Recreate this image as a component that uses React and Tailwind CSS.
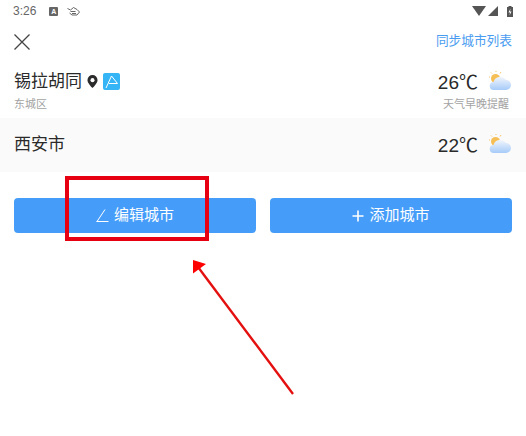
import React from 'react'

const cjk = "font-['Liberation_Sans','Noto_Sans_CJK_SC',sans-serif]"

function WeatherIcon({ id }) {
  return (
    <svg width="24" height="22" viewBox="0 0 24 22" className="shrink-0">
      <defs>
        <linearGradient id={id} x1="0" y1="0" x2="0" y2="1">
          <stop offset="0" stopColor="#f1f5fc" />
          <stop offset="1" stopColor="#a6cbf9" />
        </linearGradient>
      </defs>
      <circle cx="7.500" cy="7.500" r="4.500" fill="#f5bf55" />
      <path d="M8 1V0M4 2.500L3 1.500M2 6H1M12 2.500l1-1.500" stroke="#f5c566" strokeWidth="1" />
      <path d="M6 19a4 4 0 0 1-.5-8A7 7 0 0 1 18 9a5 5 0 0 1 0 10z" fill={`url(#${id})`} />
    </svg>
  )
}

function CityRow({ name, temp, sub, note, iconId, children, className = '' }) {
  return (
    <div className={`flex items-center justify-between pl-[14px] pr-[14px] ${className}`}>
      <div>
        <div className="flex items-center">
          <span className="text-[17px] leading-[24px] text-[#2a2a2a]">{name}</span>
          {children}
        </div>
        {sub && <div className="mt-[3px] text-[11px] leading-[14px] text-[#a3a3a3]">{sub}</div>}
      </div>
      <div className="flex flex-col items-end">
        <div className="flex items-center gap-[10px]">
          <span className="pt-[1px] text-[19px] leading-[24px] text-[#2a2a2a]">{temp}</span>
          <WeatherIcon id={iconId} />
        </div>
        {note && <div className="mt-[2px] pr-[3px] text-[11px] leading-[14px] text-[#a3a3a3]">{note}</div>}
      </div>
    </div>
  )
}

export default function App() {
  return (
    <div className={`relative h-[436px] w-[526px] overflow-hidden bg-white ${cjk}`}>
      <div className="flex h-[22px] items-center justify-between pl-[13px] pr-[13px]">
        <div className="flex items-center text-[#666666]">
          <span className="text-[12px] leading-none">3:26</span>
          <div className="ml-[13px] flex h-[9px] w-[9px] items-center justify-center rounded-[1px] bg-[#666666] text-[7px] font-bold leading-none text-white">A</div>
          <svg width="13" height="9" viewBox="0 0 13 9" fill="none" stroke="#666666" strokeWidth="1" className="ml-[9px]">
            <path d="M0.500 1.500l3 1.500 3-2.500 3.500 2 2.500 2.500-2.500 3H5L2.500 6M3.500 4.500h5M5 6.500h4" />
          </svg>
        </div>
        <div className="flex items-center gap-[2px]">
          <svg width="14" height="10" viewBox="0 0 14 10"><path d="M0 0h14L7 10z" fill="#555555" /></svg>
          <svg width="10" height="10" viewBox="0 0 10 10"><path d="M10 0v10H0z" fill="#555555" /></svg>
          <svg width="6" height="11" viewBox="0 0 6 11" className="ml-[7px]">
            <path d="M1.500 0h3v1H6v10H0V1h1.500z" fill="#555555" />
            <path d="M3.500 2.500L1.500 6.500H3L2.500 9.500l2-4H3z" fill="#ffffff" />
          </svg>
        </div>
      </div>

      <div className="flex h-[40px] items-center justify-between pl-[14px] pr-[14px]">
        <svg width="16" height="16" viewBox="0 0 16 16" fill="none" stroke="#444444" strokeWidth="1.300">
          <path d="M0.500 0.500l15 15M15.500 0.500l-15 15" />
        </svg>
        <span className="text-[12.700px] text-[#4a9cf0]">同步城市列表</span>
      </div>

      <CityRow name="锡拉胡同" temp="26℃" sub="东城区" note="天气早晚提醒" iconId="cloud-a" className="h-[56px]">
        <svg width="11" height="13" viewBox="0 0 12 14" className="ml-[5px]">
          <path d="M6 0a5.500 5.500 0 0 1 5.500 5.500C11.500 9 6 14 6 14S0.500 9 0.500 5.500A5.500 5.500 0 0 1 6 0z" fill="#2b2b2b" />
          <circle cx="6" cy="5.500" r="2.200" fill="#ffffff" />
        </svg>
        <div className="ml-[5px] flex h-[17px] w-[17px] items-center justify-center rounded-[2px] bg-[#35b4f6]">
          <svg width="15" height="15" viewBox="0 0 15 15" fill="none" stroke="#ffffff" strokeWidth="1">
            <path d="M2 14L7.500 2 13.500 9.500H5" />
          </svg>
        </div>
      </CityRow>

      <CityRow name="西安市" temp="22℃" iconId="cloud-b" className="h-[54px] bg-[#fafafa]" />

      <div className="mt-[26px] flex gap-[14px] px-[14px]">
        <button type="button" className="flex h-[35px] flex-1 items-center justify-center gap-[5px] rounded-[4px] bg-[#469df9] text-[15px] text-white">
          <svg width="13" height="13" viewBox="0 0 13 13" fill="none" stroke="#ffffff" strokeWidth="1">
            <path d="M0.500 12.500h12M1 12.500L9 0.500" />
          </svg>
          编辑城市
        </button>
        <button type="button" className="flex h-[35px] flex-1 items-center justify-center gap-[5px] rounded-[4px] bg-[#469df9] text-[15px] text-white">
          <svg width="12" height="12" viewBox="0 0 12 12" fill="none" stroke="#ffffff" strokeWidth="1.600">
            <path d="M6 0.500v11M0.500 6h11" />
          </svg>
          添加城市
        </button>
      </div>

      {/* annotation drawn over the screenshot */}
      <div className="absolute left-[65px] top-[176px] h-[65px] w-[144px] border-[4px] border-[#e60012]" />
      <svg width="526" height="436" className="absolute left-0 top-0" fill="none">
        <path d="M293 394L198 267" stroke="#e3100f" strokeWidth="2.400" />
        <path d="M193 260L206 264 193 273.500z" fill="#ff0000" />
      </svg>
    </div>
  )
}
